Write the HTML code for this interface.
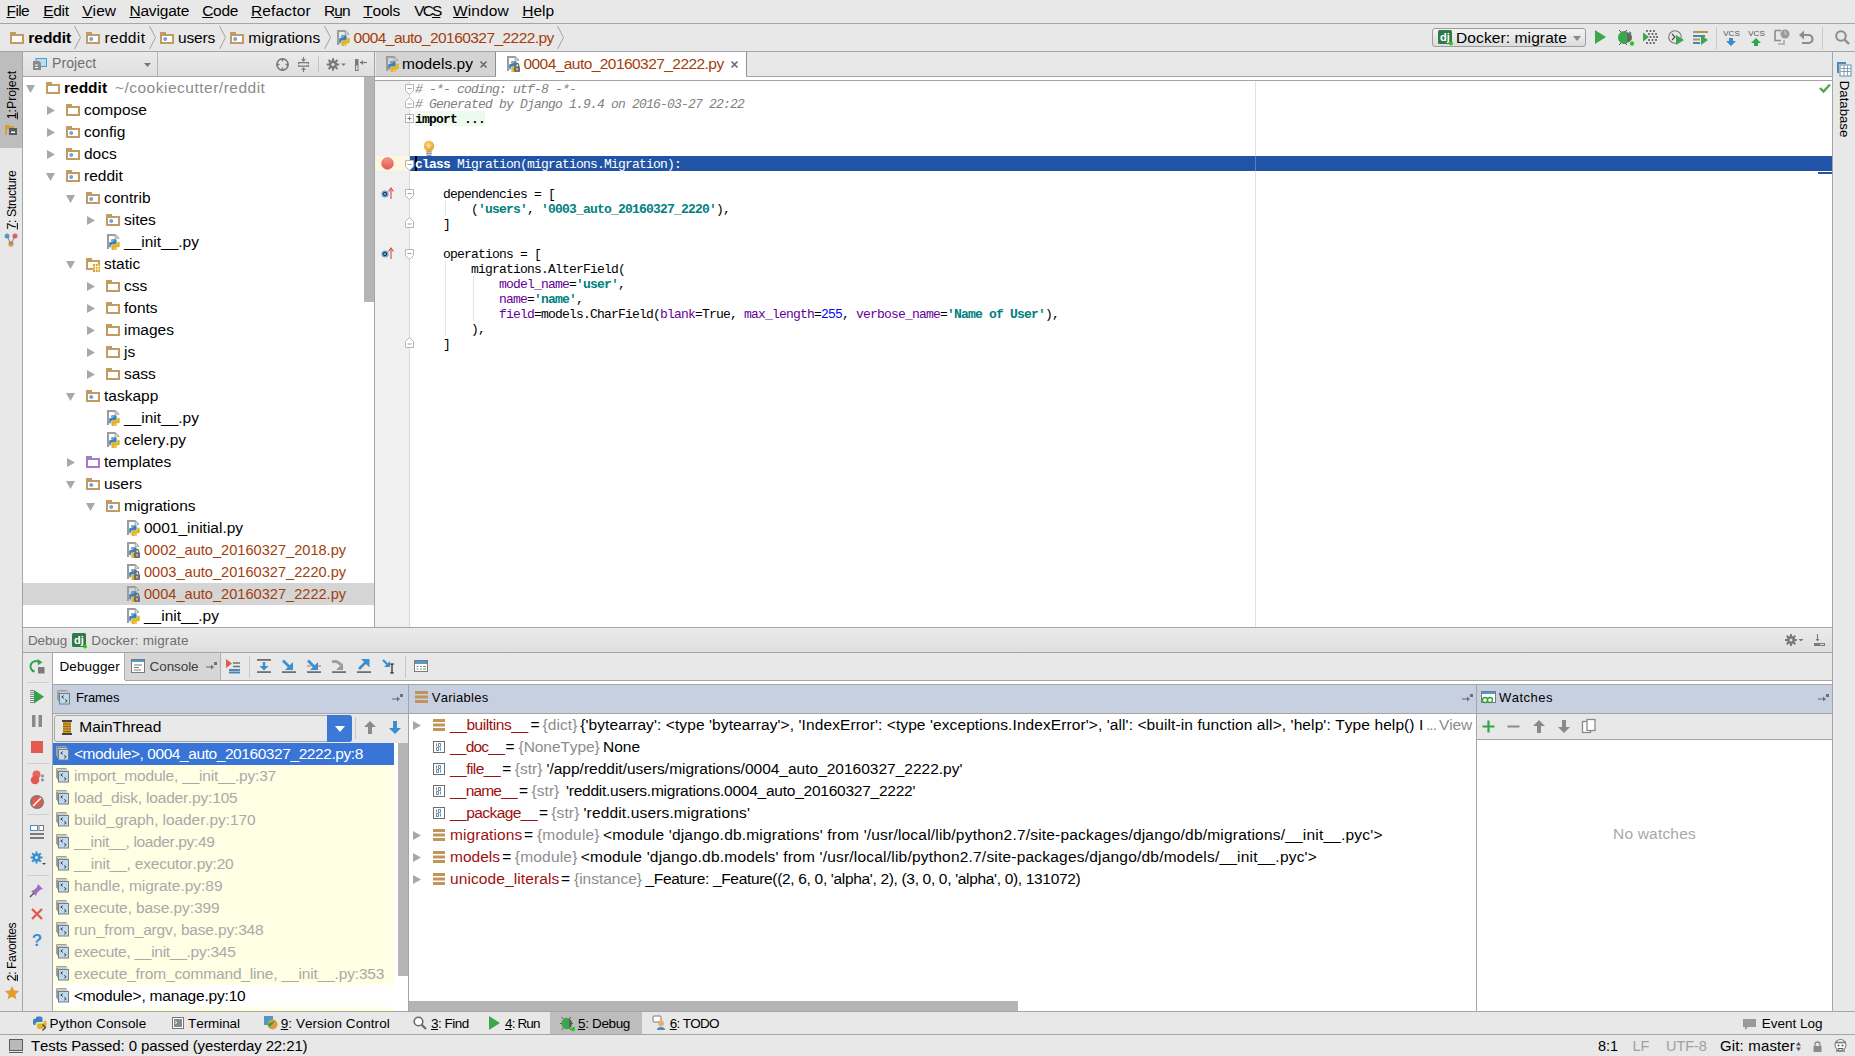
<!DOCTYPE html>
<html><head><meta charset="utf-8">
<style>
*{margin:0;padding:0;box-sizing:border-box}
html,body{width:1855px;height:1056px;overflow:hidden;background:#e8e8e8;font-family:"Liberation Sans",sans-serif;color:#000;position:relative}
.a{position:absolute}
.t{position:absolute;white-space:pre;line-height:1.1172;font-kerning:none}
svg{overflow:visible}
u{text-decoration:underline;text-underline-offset:1px}
</style></head><body>
<svg width="0" height="0" style="position:absolute">
<defs>
<symbol id="fold" viewBox="0 0 14 12"><path d="M0 0h6v2h8v10H0z" fill="#c29b62"/><rect x="2" y="4" width="10" height="6" fill="#fff"/></symbol>
<symbol id="foldm" viewBox="0 0 14 12"><path d="M0 0h6v2h8v10H0z" fill="#c29b62"/><rect x="2" y="4" width="10" height="6" fill="#fff"/><circle cx="5.2" cy="7" r="2" fill="#6aa6d6"/></symbol>
<symbol id="foldp" viewBox="0 0 14 12"><path d="M0 0h6v2h8v10H0z" fill="#a57bc4"/><rect x="2" y="4" width="10" height="6" fill="#fff"/></symbol>
<symbol id="folds" viewBox="0 0 14 14"><path d="M0 0h6v2h8v10H0z" fill="#c29b62"/><rect x="2" y="4" width="10" height="6" fill="#fff"/><rect x="7" y="6" width="7" height="8" fill="#d9a21b"/><path d="M7 8.5h7M7 11h7M9.5 6v8M12 6v8" stroke="#fff" stroke-width="0.8"/></symbol>
<symbol id="pyf" viewBox="0 0 14 16"><path d="M2 15V1h7.2" fill="none" stroke="#9c9c9c" stroke-width="2"/><path d="M9.2 0.6v3.6h3.6z" fill="#fff" stroke="#a4a4a4" stroke-width="1.1" stroke-linejoin="round"/><path d="M6 5.2h3.6q1 0 1 1v4.3H6.2q-1.5 0-1.5 1.5v1.4H4.2q-1 0-1-1V9.2q0-1.2 1.2-1.2h2.2V7.6H5.2V6.2q0-1 .8-1z" fill="#3e80ba"/><circle cx="7.1" cy="6.3" r=".55" fill="#fff"/><path d="M10 16H6.4q-1 0-1-1v-4.3h4.4q1.5 0 1.5-1.5V7.8h1.5q1 0 1 1v3.2q0 1.2-1.2 1.2H9.4v.4h1.4V15q0 1-.8 1z" fill="#e5b520"/><circle cx="8.9" cy="14.9" r=".55" fill="#fff"/></symbol>
<symbol id="pyl" viewBox="0 0 14 16"><path d="M2 15V1h7.2" fill="none" stroke="#9c9c9c" stroke-width="2"/><path d="M9.2 0.6v3.6h3.6z" fill="#fff" stroke="#a4a4a4" stroke-width="1.1" stroke-linejoin="round"/><path d="M6 5.2h3.6q1 0 1 1v4.3H6.2q-1.5 0-1.5 1.5v1.4H4.2q-1 0-1-1V9.2q0-1.2 1.2-1.2h2.2V7.6H5.2V6.2q0-1 .8-1z" fill="#3e80ba"/><circle cx="7.1" cy="6.3" r=".55" fill="#fff"/><rect x="5.4" y="11" width="3" height="5" fill="#e5b520"/><rect x="8" y="10.2" width="6" height="5.8" rx=".8" fill="#6e6e6e"/><path d="M9.3 10.5V9.2a1.7 1.7 0 0 1 3.4 0v1.3" fill="none" stroke="#6e6e6e" stroke-width="1.3"/><rect x="10.3" y="12" width="1.4" height="2.4" fill="#f0d060"/></symbol>
<symbol id="trd" viewBox="0 0 9 8"><path d="M0 0h9L4.5 8z" fill="#a8a8a8"/></symbol>
<symbol id="trr" viewBox="0 0 8 9"><path d="M0 0v9l8-4.5z" fill="#a8a8a8"/></symbol>
<symbol id="chev" viewBox="0 0 7 23"><path d="M0.5 0l6 11.5-6 11.5" fill="none" stroke="#9a9a9a" stroke-width="0.9"/></symbol>
<symbol id="frm" viewBox="0 0 15 16"><path d="M0.5 10V0.5H10.5" fill="none" stroke="#a0a0a0"/><path d="M1.5 11.5V2H11.5" fill="#fff" stroke="#9a9a9a"/><rect x="2.5" y="3.5" width="10" height="10.5" fill="#bcd9ef" stroke="#7c7c7c"/><path d="M6.8 5.6L4.8 7l2 1.4M8.2 9.4l2 1.4-2 1.4" fill="none" stroke="#333" stroke-width="0.9"/></symbol>
<symbol id="varl" viewBox="0 0 14 13"><rect x="0" y="0" width="14" height="3" fill="#b88b48"/><rect x="0" y="5" width="14" height="3" fill="#b88b48"/><rect x="0" y="10" width="14" height="3" fill="#b88b48"/></symbol>
<symbol id="vbin" viewBox="0 0 14 14"><rect x="0.5" y="0.5" width="13" height="13" fill="#fff" stroke="#6e6e6e"/><text x="7" y="10.5" font-size="7" text-anchor="middle" font-family="Liberation Mono" fill="#555" font-weight="bold">01</text></symbol>
</defs></svg>
<div class="t " style="left:6.5px;top:1.87px;font-size:15.50px;letter-spacing:-0.594px;"><u>F</u>ile</div><div class="t " style="left:43.3px;top:1.87px;font-size:15.50px;letter-spacing:-0.327px;"><u>E</u>dit</div><div class="t " style="left:82.2px;top:1.87px;font-size:15.50px;letter-spacing:0.076px;"><u>V</u>iew</div><div class="t " style="left:129.4px;top:1.87px;font-size:15.50px;letter-spacing:-0.172px;"><u>N</u>avigate</div><div class="t " style="left:202.2px;top:1.87px;font-size:15.50px;letter-spacing:-0.314px;"><u>C</u>ode</div><div class="t " style="left:251.0px;top:1.87px;font-size:15.50px;letter-spacing:0.140px;"><u>R</u>efactor</div><div class="t " style="left:324.0px;top:1.87px;font-size:15.50px;letter-spacing:-0.978px;">R<u>u</u>n</div><div class="t " style="left:363.3px;top:1.87px;font-size:15.50px;letter-spacing:-0.240px;"><u>T</u>ools</div><div class="t " style="left:414.2px;top:1.87px;font-size:15.50px;letter-spacing:-1.890px;">VC<u>S</u></div><div class="t " style="left:453.0px;top:1.87px;font-size:15.50px;letter-spacing:0.129px;"><u>W</u>indow</div><div class="t " style="left:522.3px;top:1.87px;font-size:15.50px;letter-spacing:-0.019px;"><u>H</u>elp</div><div class="a" style="left:0px;top:23px;width:1855px;height:1px;background:#a5a5a5;"></div><svg class="a" style="left:10px;top:32px;" width="14" height="12"><use href="#fold"/></svg><div class="t " style="left:28.3px;top:28.57px;font-size:15.50px;font-weight:bold;letter-spacing:-0.026px;">reddit</div><svg class="a" style="left:74px;top:26px;" width="7" height="23"><use href="#chev"/></svg><svg class="a" style="left:86px;top:32px;" width="14" height="12"><use href="#foldm"/></svg><div class="t " style="left:104.4px;top:28.57px;font-size:15.50px;letter-spacing:0.355px;">reddit</div><svg class="a" style="left:149px;top:26px;" width="7" height="23"><use href="#chev"/></svg><svg class="a" style="left:160px;top:32px;" width="14" height="12"><use href="#foldm"/></svg><div class="t " style="left:178.0px;top:28.57px;font-size:15.50px;letter-spacing:-0.180px;">users</div><svg class="a" style="left:219px;top:26px;" width="7" height="23"><use href="#chev"/></svg><svg class="a" style="left:230px;top:32px;" width="14" height="12"><use href="#foldm"/></svg><div class="t " style="left:248.2px;top:28.57px;font-size:15.50px;letter-spacing:0.060px;">migrations</div><svg class="a" style="left:324px;top:26px;" width="7" height="23"><use href="#chev"/></svg><svg class="a" style="left:336px;top:30px;" width="14" height="16"><use href="#pyf"/></svg><div class="t " style="left:353.6px;top:28.57px;font-size:15.50px;color:#a33e0b;letter-spacing:-0.555px;">0004_auto_20160327_2222.py</div><svg class="a" style="left:557px;top:26px;" width="7" height="23"><use href="#chev"/></svg><div class="a" style="left:0px;top:51px;width:1855px;height:1px;background:#a5a5a5;"></div><div class="a" style="left:1432px;top:28px;width:154px;height:19px;border:1px solid #9c9c9c;border-radius:3px;background:linear-gradient(#f4f4f4,#dcdcdc)"></div><svg class="a" style="left:1438px;top:30px;" width="15" height="15" viewBox="0 0 15 15"><rect x="0" y="0" width="14" height="14" rx="1.5" fill="#2f7a4a"/><text x="6.8" y="10.5" font-size="11" font-weight="bold" text-anchor="middle" fill="#fff" font-family="Liberation Sans">dj</text><circle cx="13" cy="13.5" r="2" fill="#22cc22"/></svg><div class="t " style="left:1456.0px;top:28.97px;font-size:15.50px;letter-spacing:0.107px;">Docker: migrate</div><svg class="a" style="left:1573px;top:36px;" width="8" height="5" viewBox="0 0 8 5"><path d="M0 0h8l-4 5z" fill="#8a8a8a"/></svg><svg class="a" style="left:1595px;top:30px;" width="11" height="14" viewBox="0 0 11 14"><path d="M0 0v14l11-7z" fill="#3ba64b"/></svg><svg class="a" style="left:1617px;top:29px;" width="18" height="17" viewBox="0 0 18 17"><ellipse cx="7" cy="8.5" rx="6" ry="6.5" fill="#3ba64b"/><path d="M10 3.5a5 5 0 0 1 0 10" fill="#666"/><path d="M2 1l2 2M10 1l-2 2M2 16l2-2M10 16l-2-2M12 3q2 0 2 2" stroke="#555" stroke-width="1" fill="none"/><circle cx="15" cy="14.5" r="2.2" fill="#22cc22"/></svg><svg class="a" style="left:1643px;top:30px;" width="15" height="15" viewBox="0 0 15 15"><path d="M0 2.5v9l6-4.5z" fill="#3ba64b"/><g fill="#555"><circle cx="4" cy="1" r="1"/><circle cx="7.5" cy="1" r="1"/><circle cx="11" cy="1" r="1"/><circle cx="6" cy="4" r="1"/><circle cx="9.5" cy="4" r="1"/><circle cx="13" cy="4" r="1"/><circle cx="7.5" cy="7" r="1"/><circle cx="11" cy="7" r="1"/><circle cx="14" cy="7" r="1"/><circle cx="6" cy="10" r="1"/><circle cx="9.5" cy="10" r="1"/><circle cx="13" cy="10" r="1"/><circle cx="4" cy="13" r="1"/><circle cx="7.5" cy="13" r="1"/><circle cx="11" cy="13" r="1"/></g></svg><svg class="a" style="left:1668px;top:30px;" width="16" height="15" viewBox="0 0 16 15"><circle cx="7" cy="7" r="6.3" fill="none" stroke="#777" stroke-width="1.1"/><path d="M4 4l3 3-3 3" fill="none" stroke="#444" stroke-width="1.1"/><path d="M8 5v10l8-5z" fill="#3ba64b"/></svg><svg class="a" style="left:1693px;top:31px;" width="16" height="15" viewBox="0 0 16 15"><rect x="0" y="0" width="15" height="2" fill="#c28f4a"/><rect x="0" y="4" width="12" height="2" fill="#3d8ac8"/><rect x="0" y="7.5" width="7" height="2" fill="#c28f4a"/><rect x="0" y="11" width="7" height="2" fill="#3d8ac8"/><path d="M8 4v10l7-5z" fill="#3ba64b"/></svg><div class="a" style="left:1716px;top:27px;width:1px;height:22px;background:#c8c8c8;"></div><svg class="a" style="left:1724px;top:29px;" width="15" height="17" viewBox="0 0 15 17"><text x="7.5" y="7" font-size="8" text-anchor="middle" font-family="Liberation Sans" fill="#555">VCS</text><path d="M5 9h4v3h3l-5 5-5-5h3z" fill="#3d8ac8"/></svg><svg class="a" style="left:1749px;top:29px;" width="15" height="17" viewBox="0 0 15 17"><text x="7.5" y="7" font-size="8" text-anchor="middle" font-family="Liberation Sans" fill="#555">VCS</text><path d="M7 9l5 5H9v3H5v-3H2z" fill="#2ba84a"/></svg><svg class="a" style="left:1774px;top:29px;" width="16" height="16" viewBox="0 0 16 16"><path d="M1 1.5h6M1 1.5v10h6" fill="none" stroke="#8c8c8c" stroke-width="1.6"/><path d="M4 15h6v-4" fill="none" stroke="#a8a8a8" stroke-width="1.6"/><circle cx="11" cy="5" r="4.5" fill="#9a9a9a"/><path d="M11 2v3h2" stroke="#e0e0e0" stroke-width="0.8" fill="none"/></svg><svg class="a" style="left:1799px;top:30px;" width="15" height="15" viewBox="0 0 15 15"><path d="M3.5 5h6a4 4 0 0 1 0 8H3" fill="none" stroke="#8c8c8c" stroke-width="2.2"/><path d="M0 5l5-4.5v9z" fill="#8c8c8c"/></svg><div class="a" style="left:1822px;top:27px;width:1px;height:22px;background:#c8c8c8;"></div><svg class="a" style="left:1835px;top:30px;" width="15" height="15" viewBox="0 0 15 15"><circle cx="6" cy="6" r="4.8" fill="none" stroke="#8c8c8c" stroke-width="2"/><path d="M9.5 9.5l4.5 4.5" stroke="#8c8c8c" stroke-width="2.4"/></svg><div class="a" style="left:0px;top:52px;width:22px;height:96px;background:#bdbdbd;"></div><div class="a" style="left:22px;top:52px;width:1px;height:960px;background:#a5a5a5;"></div><div class="t" style="left:12px;top:71px;font-size:14.5px;transform:translate(-50%,0) rotate(-90deg);transform-origin:50% 50%"></div><div class="a" style="left:12px;top:95.0px;width:0;height:0"><div style="position:absolute;left:0;top:0;transform:translate(-50%,-50%) rotate(-90deg);white-space:pre;font-size:12.3px;line-height:1;color:#000;letter-spacing:0px"><u>1</u>:Project</div></div><svg class="a" style="left:5px;top:123px;" width="13" height="12" viewBox="0 0 13 12"><path d="M0 2h4l1 1h4v3H2v6H0z" fill="#d99c3c"/><rect x="4" y="5" width="8" height="7" fill="#5a5a5a"/><rect x="6" y="8.5" width="4" height="1.5" fill="#fff"/></svg><div class="a" style="left:12px;top:200.25px;width:0;height:0"><div style="position:absolute;left:0;top:0;transform:translate(-50%,-50%) rotate(-90deg);white-space:pre;font-size:12.3px;line-height:1;color:#000;letter-spacing:-0.38px"><u>7</u>: Structure</div></div><svg class="a" style="left:4px;top:233px;" width="14" height="14" viewBox="0 0 14 14"><circle cx="3" cy="3" r="2.5" fill="#5b9bd5"/><circle cx="11" cy="3" r="2.5" fill="#e06060"/><circle cx="7" cy="11" r="2.7" fill="#d59a5b"/><path d="M3 3l4 8 4-8" fill="none" stroke="#777" stroke-width="0.9"/></svg><div class="a" style="left:12px;top:952.0px;width:0;height:0"><div style="position:absolute;left:0;top:0;transform:translate(-50%,-50%) rotate(-90deg);white-space:pre;font-size:12.3px;line-height:1;color:#000;letter-spacing:-0.5px"><u>2</u>: Favorites</div></div><svg class="a" style="left:5px;top:986px;" width="14" height="14" viewBox="0 0 14 14"><path d="M7 0l2.1 4.6 4.9.5-3.7 3.3 1.1 4.9L7 10.8 2.6 13.3l1.1-4.9L0 5.1l4.9-.5z" fill="#e49b2a"/></svg><div class="a" style="left:1832px;top:52px;width:1px;height:960px;background:#a5a5a5;"></div><svg class="a" style="left:1837px;top:62px;" width="14" height="14" viewBox="0 0 14 14"><path d="M0 0h9v2H2v9H0z" fill="#4a8ac0"/><rect x="3" y="3" width="11" height="11" fill="#fff" stroke="#6a8aa8" stroke-width="1"/><path d="M3.5 6.5h10M3.5 9.5h10M7 3.5v10M10.5 3.5v10" stroke="#6a8aa8" stroke-width="0.8"/></svg><div class="a" style="left:1843.5px;top:109.0px;width:0;height:0"><div style="position:absolute;left:0;top:0;transform:translate(-50%,-50%) rotate(90deg);white-space:pre;font-size:13.2px;line-height:1;color:#000;letter-spacing:0px">Database</div></div><div class="a" style="left:23px;top:52px;width:352px;height:24px;background:linear-gradient(#ebebeb,#dfdfdf)"></div><div class="a" style="left:157px;top:52px;width:1px;height:24px;background:#b4b4b4;"></div><svg class="a" style="left:33px;top:58px;" width="14" height="12" viewBox="0 0 14 12"><rect x="3" y="0.5" width="10.5" height="8" fill="#b8dcf2" stroke="#4f9bd0"/><path d="M0 3h6l2 2v7H0z" fill="#8a8a8a"/><rect x="2" y="6.5" width="3" height="1" fill="#fff"/><rect x="2" y="9" width="3" height="1" fill="#fff"/></svg><div class="t " style="left:52.0px;top:55.93px;font-size:14.00px;color:#6e6e6e;letter-spacing:0.090px;">Project</div><svg class="a" style="left:144px;top:63px;" width="7" height="4" viewBox="0 0 7 4"><path d="M0 0h7l-3.5 4z" fill="#777"/></svg><svg class="a" style="left:276px;top:58px;" width="13" height="13" viewBox="0 0 13 13"><circle cx="6.5" cy="6.5" r="5.6" fill="none" stroke="#7a7a7a" stroke-width="1.6"/><path d="M6.5 0.5v3M6.5 9.5v3M0.5 6.5h3M9.5 6.5h3" stroke="#7a7a7a" stroke-width="1.4"/></svg><svg class="a" style="left:298px;top:57px;" width="11" height="15" viewBox="0 0 11 15"><path d="M0.6 7V5.6h9.8V7M0.6 7.8V9.2h9.8V7.8" fill="none" stroke="#7a7a7a" stroke-width="1.2"/><path d="M5.5 0v4M5.5 15v-4" stroke="#7a7a7a" stroke-width="1.2"/><path d="M3 2.2l2.5 2.5 2.5-2.5M3 12.8l2.5-2.5 2.5 2.5" fill="#7a7a7a"/></svg><div class="a" style="left:318px;top:56px;width:1px;height:16px;background:#c4c4c4;"></div><svg class="a" style="left:327px;top:58px;" width="20" height="13" viewBox="0 0 20 13"><g transform="translate(6,6.5)"><circle r="4.2" fill="#7a7a7a"/><circle r="1.6" fill="#e4e4e4"/><g stroke="#7a7a7a" stroke-width="2"><path d="M0-6.3v2.5M0 6.3v-2.5M-6.3 0h2.5M6.3 0h-2.5M-4.5-4.5l1.8 1.8M4.5 4.5l-1.8-1.8M-4.5 4.5l1.8-1.8M4.5-4.5l-1.8 1.8"/></g></g><path d="M14 5.5h5l-2.5 2.5z" fill="#7a7a7a"/></svg><svg class="a" style="left:355px;top:59px;" width="13" height="12" viewBox="0 0 13 12"><rect x="0.5" y="0.5" width="2.5" height="11" fill="none" stroke="#7a7a7a" stroke-width="1"/><rect x="0.5" y="0.5" width="2.5" height="6" fill="#7a7a7a"/><path d="M5 3.5h7" stroke="#7a7a7a" stroke-width="1.2"/><path d="M5 3.5l3-2.5v5z" fill="#7a7a7a"/></svg><div class="a" style="left:23px;top:76px;width:352px;height:1px;background:#a5a5a5;"></div><div class="a" style="left:23px;top:77px;width:351px;height:551px;background:#fff;"></div><div class="a" style="left:364px;top:77px;width:10px;height:225px;background:#b5b5b5;"></div><div class="a" style="left:374px;top:52px;width:1px;height:576px;background:#a5a5a5;"></div><div class="a" style="left:23px;top:583px;width:351px;height:22px;background:#d5d5d5;"></div><svg class="a" style="left:26px;top:85px;" width="9" height="8"><use href="#trd"/></svg><svg class="a" style="left:46px;top:82px;" width="14" height="12"><use href="#fold"/></svg><div class="t " style="left:64.0px;top:79.27px;font-size:15.50px;"><b>reddit</b></div><svg class="a" style="left:47px;top:106px;" width="8" height="9"><use href="#trr"/></svg><svg class="a" style="left:66px;top:104px;" width="14" height="12"><use href="#fold"/></svg><div class="t " style="left:84.0px;top:101.27px;font-size:15.50px;">compose</div><svg class="a" style="left:47px;top:128px;" width="8" height="9"><use href="#trr"/></svg><svg class="a" style="left:66px;top:126px;" width="14" height="12"><use href="#foldm"/></svg><div class="t " style="left:84.0px;top:123.27px;font-size:15.50px;">config</div><svg class="a" style="left:47px;top:150px;" width="8" height="9"><use href="#trr"/></svg><svg class="a" style="left:66px;top:148px;" width="14" height="12"><use href="#foldm"/></svg><div class="t " style="left:84.0px;top:145.27px;font-size:15.50px;">docs</div><svg class="a" style="left:46px;top:173px;" width="9" height="8"><use href="#trd"/></svg><svg class="a" style="left:66px;top:170px;" width="14" height="12"><use href="#foldm"/></svg><div class="t " style="left:84.0px;top:167.27px;font-size:15.50px;">reddit</div><svg class="a" style="left:66px;top:195px;" width="9" height="8"><use href="#trd"/></svg><svg class="a" style="left:86px;top:192px;" width="14" height="12"><use href="#foldm"/></svg><div class="t " style="left:104.0px;top:189.27px;font-size:15.50px;">contrib</div><svg class="a" style="left:87px;top:216px;" width="8" height="9"><use href="#trr"/></svg><svg class="a" style="left:106px;top:214px;" width="14" height="12"><use href="#foldm"/></svg><div class="t " style="left:124.0px;top:211.27px;font-size:15.50px;">sites</div><svg class="a" style="left:106px;top:234px;" width="14" height="16"><use href="#pyf"/></svg><div class="t " style="left:124.0px;top:233.27px;font-size:15.50px;">__init__.py</div><svg class="a" style="left:66px;top:261px;" width="9" height="8"><use href="#trd"/></svg><svg class="a" style="left:86px;top:258px;" width="14" height="14"><use href="#folds"/></svg><div class="t " style="left:104.0px;top:255.27px;font-size:15.50px;">static</div><svg class="a" style="left:87px;top:282px;" width="8" height="9"><use href="#trr"/></svg><svg class="a" style="left:106px;top:280px;" width="14" height="12"><use href="#fold"/></svg><div class="t " style="left:124.0px;top:277.27px;font-size:15.50px;">css</div><svg class="a" style="left:87px;top:304px;" width="8" height="9"><use href="#trr"/></svg><svg class="a" style="left:106px;top:302px;" width="14" height="12"><use href="#fold"/></svg><div class="t " style="left:124.0px;top:299.27px;font-size:15.50px;">fonts</div><svg class="a" style="left:87px;top:326px;" width="8" height="9"><use href="#trr"/></svg><svg class="a" style="left:106px;top:324px;" width="14" height="12"><use href="#fold"/></svg><div class="t " style="left:124.0px;top:321.27px;font-size:15.50px;">images</div><svg class="a" style="left:87px;top:348px;" width="8" height="9"><use href="#trr"/></svg><svg class="a" style="left:106px;top:346px;" width="14" height="12"><use href="#fold"/></svg><div class="t " style="left:124.0px;top:343.27px;font-size:15.50px;">js</div><svg class="a" style="left:87px;top:370px;" width="8" height="9"><use href="#trr"/></svg><svg class="a" style="left:106px;top:368px;" width="14" height="12"><use href="#fold"/></svg><div class="t " style="left:124.0px;top:365.27px;font-size:15.50px;">sass</div><svg class="a" style="left:66px;top:393px;" width="9" height="8"><use href="#trd"/></svg><svg class="a" style="left:86px;top:390px;" width="14" height="12"><use href="#foldm"/></svg><div class="t " style="left:104.0px;top:387.27px;font-size:15.50px;">taskapp</div><svg class="a" style="left:106px;top:410px;" width="14" height="16"><use href="#pyf"/></svg><div class="t " style="left:124.0px;top:409.27px;font-size:15.50px;">__init__.py</div><svg class="a" style="left:106px;top:432px;" width="14" height="16"><use href="#pyf"/></svg><div class="t " style="left:124.0px;top:431.27px;font-size:15.50px;">celery.py</div><svg class="a" style="left:67px;top:458px;" width="8" height="9"><use href="#trr"/></svg><svg class="a" style="left:86px;top:456px;" width="14" height="12"><use href="#foldp"/></svg><div class="t " style="left:104.0px;top:453.27px;font-size:15.50px;">templates</div><svg class="a" style="left:66px;top:481px;" width="9" height="8"><use href="#trd"/></svg><svg class="a" style="left:86px;top:478px;" width="14" height="12"><use href="#foldm"/></svg><div class="t " style="left:104.0px;top:475.27px;font-size:15.50px;">users</div><svg class="a" style="left:86px;top:503px;" width="9" height="8"><use href="#trd"/></svg><svg class="a" style="left:106px;top:500px;" width="14" height="12"><use href="#foldm"/></svg><div class="t " style="left:124.0px;top:497.27px;font-size:15.50px;">migrations</div><svg class="a" style="left:126px;top:520px;" width="14" height="16"><use href="#pyf"/></svg><div class="t " style="left:144.0px;top:519.27px;font-size:15.50px;">0001_initial.py</div><svg class="a" style="left:126px;top:542px;" width="14" height="16"><use href="#pyl"/></svg><div class="t " style="left:144.0px;top:541.27px;font-size:15.50px;"><span style="color:#a33e0b;font-size:14.6px">0002_auto_20160327_2018.py</span></div><svg class="a" style="left:126px;top:564px;" width="14" height="16"><use href="#pyl"/></svg><div class="t " style="left:144.0px;top:563.27px;font-size:15.50px;"><span style="color:#a33e0b;font-size:14.6px">0003_auto_20160327_2220.py</span></div><svg class="a" style="left:126px;top:586px;" width="14" height="16"><use href="#pyl"/></svg><div class="t " style="left:144.0px;top:585.27px;font-size:15.50px;"><span style="color:#a33e0b;font-size:14.6px">0004_auto_20160327_2222.py</span></div><svg class="a" style="left:126px;top:608px;" width="14" height="16"><use href="#pyf"/></svg><div class="t " style="left:144.0px;top:607.27px;font-size:15.50px;">__init__.py</div><div class="t " style="left:114.9px;top:79.27px;font-size:15.50px;color:#8c8c8c;letter-spacing:0.500px;">~/cookiecutter/reddit</div><div class="a" style="left:375px;top:76px;width:1457px;height:1px;background:#a5a5a5;"></div><div class="a" style="left:375px;top:77px;width:1457px;height:3px;background:#fff;"></div><div class="a" style="left:376px;top:52px;width:119px;height:24px;background:#d4d4d4;"></div><div class="a" style="left:495px;top:52px;width:1px;height:24px;background:#8f8f8f;"></div><div class="a" style="left:496px;top:52px;width:250px;height:25px;background:#fff;"></div><div class="a" style="left:746px;top:52px;width:1px;height:24px;background:#8f8f8f;"></div><svg class="a" style="left:385px;top:56px;" width="14" height="16"><use href="#pyf"/></svg><div class="t " style="left:402.0px;top:54.57px;font-size:15.50px;letter-spacing:0.040px;">models.py</div><svg class="a" style="left:480px;top:61px;" width="7" height="7" viewBox="0 0 7 7"><path d="M0.5 0.5l6 6M6.5 0.5l-6 6" stroke="#6a6a6a" stroke-width="1.6"/></svg><svg class="a" style="left:506px;top:56px;" width="14" height="16"><use href="#pyl"/></svg><div class="t " style="left:523.5px;top:54.57px;font-size:15.50px;color:#a33e0b;letter-spacing:-0.559px;">0004_auto_20160327_2222.py</div><svg class="a" style="left:731px;top:61px;" width="7" height="7" viewBox="0 0 7 7"><path d="M0.5 0.5l6 6M6.5 0.5l-6 6" stroke="#6a6a6a" stroke-width="1.6"/></svg><div class="a" style="left:375px;top:80px;width:1457px;height:1px;background:#a5a5a5;"></div><div class="a" style="left:375px;top:81px;width:1457px;height:547px;background:#fff;"></div><div class="a" style="left:375px;top:81px;width:34px;height:547px;background:#f0f0f0;"></div><div class="a" style="left:375px;top:156px;width:34px;height:15px;background:#fdf7e2;"></div><div class="a" style="left:409px;top:81px;width:1px;height:547px;background:#d8d8d8;"></div><div class="a" style="left:410px;top:156px;width:1422px;height:15px;background:#2154a6;"></div><div class="a" style="left:1255px;top:81px;width:1px;height:75px;background:#e2e2e2;"></div><div class="a" style="left:1255px;top:156px;width:1px;height:15px;background:#5a7fbf;"></div><div class="a" style="left:1255px;top:171px;width:1px;height:457px;background:#e2e2e2;"></div><div class="a" style="left:415px;top:156px;width:2px;height:15px;background:#000;"></div><div class="a" style="left:1818px;top:172px;width:14px;height:2px;background:#2154a6;"></div><svg class="a" style="left:1819px;top:83px;" width="12" height="10" viewBox="0 0 12 10"><path d="M1 5l3.5 3.5L11 1.5" fill="none" stroke="#4fa84f" stroke-width="2.4"/></svg><div class="a" style="left:415px;top:111px;width:70px;height:15px;background:#eefaee;"></div><div class="t " style="left:415.0px;top:83.48px;font-size:13.00px;font-family:'Liberation Mono',monospace;color:#808080;font-style:italic;letter-spacing:-0.801px"># -*- coding: utf-8 -*-</div><div class="t " style="left:415.0px;top:98.48px;font-size:13.00px;font-family:'Liberation Mono',monospace;color:#808080;font-style:italic;letter-spacing:-0.801px"># Generated by Django 1.9.4 on 2016-03-27 22:22</div><div class="t " style="left:415.0px;top:113.48px;font-size:13.00px;font-family:'Liberation Mono',monospace;color:#000;font-weight:bold;letter-spacing:-0.801px">import ...</div><div class="t " style="left:415.0px;top:158.48px;font-size:13.00px;font-family:'Liberation Mono',monospace;color:#fff;font-weight:bold;letter-spacing:-0.801px">class</div><div class="t " style="left:457.0px;top:158.48px;font-size:13.00px;font-family:'Liberation Mono',monospace;color:#fff;letter-spacing:-0.801px">Migration(migrations.Migration):</div><div class="t " style="left:443.0px;top:188.48px;font-size:13.00px;font-family:'Liberation Mono',monospace;color:#000;letter-spacing:-0.801px">dependencies = [</div><div class="t " style="left:471.0px;top:203.48px;font-size:13.00px;font-family:'Liberation Mono',monospace;color:#000;letter-spacing:-0.801px">(</div><div class="t " style="left:478.0px;top:203.48px;font-size:13.00px;font-family:'Liberation Mono',monospace;color:#008080;font-weight:bold;letter-spacing:-0.801px">&#x27;users&#x27;</div><div class="t " style="left:527.0px;top:203.48px;font-size:13.00px;font-family:'Liberation Mono',monospace;color:#000;letter-spacing:-0.801px">, </div><div class="t " style="left:541.0px;top:203.48px;font-size:13.00px;font-family:'Liberation Mono',monospace;color:#008080;font-weight:bold;letter-spacing:-0.801px">&#x27;0003_auto_20160327_2220&#x27;</div><div class="t " style="left:716.0px;top:203.48px;font-size:13.00px;font-family:'Liberation Mono',monospace;color:#000;letter-spacing:-0.801px">),</div><div class="t " style="left:443.0px;top:218.48px;font-size:13.00px;font-family:'Liberation Mono',monospace;color:#000;letter-spacing:-0.801px">]</div><div class="t " style="left:443.0px;top:248.48px;font-size:13.00px;font-family:'Liberation Mono',monospace;color:#000;letter-spacing:-0.801px">operations = [</div><div class="t " style="left:471.0px;top:263.48px;font-size:13.00px;font-family:'Liberation Mono',monospace;color:#000;letter-spacing:-0.801px">migrations.AlterField(</div><div class="t " style="left:499.0px;top:278.48px;font-size:13.00px;font-family:'Liberation Mono',monospace;color:#660099;letter-spacing:-0.801px">model_name</div><div class="t " style="left:569.0px;top:278.48px;font-size:13.00px;font-family:'Liberation Mono',monospace;color:#000;letter-spacing:-0.801px">=</div><div class="t " style="left:576.0px;top:278.48px;font-size:13.00px;font-family:'Liberation Mono',monospace;color:#008080;font-weight:bold;letter-spacing:-0.801px">&#x27;user&#x27;</div><div class="t " style="left:618.0px;top:278.48px;font-size:13.00px;font-family:'Liberation Mono',monospace;color:#000;letter-spacing:-0.801px">,</div><div class="t " style="left:499.0px;top:293.48px;font-size:13.00px;font-family:'Liberation Mono',monospace;color:#660099;letter-spacing:-0.801px">name</div><div class="t " style="left:527.0px;top:293.48px;font-size:13.00px;font-family:'Liberation Mono',monospace;color:#000;letter-spacing:-0.801px">=</div><div class="t " style="left:534.0px;top:293.48px;font-size:13.00px;font-family:'Liberation Mono',monospace;color:#008080;font-weight:bold;letter-spacing:-0.801px">&#x27;name&#x27;</div><div class="t " style="left:576.0px;top:293.48px;font-size:13.00px;font-family:'Liberation Mono',monospace;color:#000;letter-spacing:-0.801px">,</div><div class="t " style="left:499.0px;top:308.48px;font-size:13.00px;font-family:'Liberation Mono',monospace;color:#660099;letter-spacing:-0.801px">field</div><div class="t " style="left:534.0px;top:308.48px;font-size:13.00px;font-family:'Liberation Mono',monospace;color:#000;letter-spacing:-0.801px">=models.CharField(</div><div class="t " style="left:660.0px;top:308.48px;font-size:13.00px;font-family:'Liberation Mono',monospace;color:#660099;letter-spacing:-0.801px">blank</div><div class="t " style="left:695.0px;top:308.48px;font-size:13.00px;font-family:'Liberation Mono',monospace;color:#000;letter-spacing:-0.801px">=True, </div><div class="t " style="left:744.0px;top:308.48px;font-size:13.00px;font-family:'Liberation Mono',monospace;color:#660099;letter-spacing:-0.801px">max_length</div><div class="t " style="left:814.0px;top:308.48px;font-size:13.00px;font-family:'Liberation Mono',monospace;color:#000;letter-spacing:-0.801px">=</div><div class="t " style="left:821.0px;top:308.48px;font-size:13.00px;font-family:'Liberation Mono',monospace;color:#0000ff;letter-spacing:-0.801px">255</div><div class="t " style="left:842.0px;top:308.48px;font-size:13.00px;font-family:'Liberation Mono',monospace;color:#000;letter-spacing:-0.801px">, </div><div class="t " style="left:856.0px;top:308.48px;font-size:13.00px;font-family:'Liberation Mono',monospace;color:#660099;letter-spacing:-0.801px">verbose_name</div><div class="t " style="left:940.0px;top:308.48px;font-size:13.00px;font-family:'Liberation Mono',monospace;color:#000;letter-spacing:-0.801px">=</div><div class="t " style="left:947.0px;top:308.48px;font-size:13.00px;font-family:'Liberation Mono',monospace;color:#008080;font-weight:bold;letter-spacing:-0.801px">&#x27;Name of User&#x27;</div><div class="t " style="left:1045.0px;top:308.48px;font-size:13.00px;font-family:'Liberation Mono',monospace;color:#000;letter-spacing:-0.801px">),</div><div class="t " style="left:471.0px;top:323.48px;font-size:13.00px;font-family:'Liberation Mono',monospace;color:#000;letter-spacing:-0.801px">),</div><div class="t " style="left:443.0px;top:338.48px;font-size:13.00px;font-family:'Liberation Mono',monospace;color:#000;letter-spacing:-0.801px">]</div><svg class="a" style="left:405px;top:84px;" width="9" height="11" viewBox="0 0 9 11"><path d="M0.5 0.5h8v6l-4 4-4-4z" fill="#fff" stroke="#b4b4b4"/><path d="M2.5 4.5h4" stroke="#a0a0a0"/></svg><svg class="a" style="left:405px;top:97px;" width="9" height="11" viewBox="0 0 9 11"><path d="M0.5 10.5h8v-6l-4-4-4 4z" fill="#fff" stroke="#b4b4b4"/><path d="M2.5 7h4" stroke="#a0a0a0"/></svg><svg class="a" style="left:405px;top:114px;" width="9" height="9" viewBox="0 0 9 9"><rect x="0.5" y="0.5" width="8" height="8" fill="#fff" stroke="#b4b4b4"/><path d="M2.5 4.5h4M4.5 2.5v4" stroke="#808080"/></svg><svg class="a" style="left:405px;top:160px;" width="9" height="11" viewBox="0 0 9 11"><path d="M0.5 0.5h8v6l-4 4-4-4z" fill="#fff" stroke="#b4b4b4"/><path d="M2.5 4.5h4" stroke="#a0a0a0"/></svg><svg class="a" style="left:405px;top:189px;" width="9" height="11" viewBox="0 0 9 11"><path d="M0.5 0.5h8v6l-4 4-4-4z" fill="#fff" stroke="#b4b4b4"/><path d="M2.5 4.5h4" stroke="#a0a0a0"/></svg><svg class="a" style="left:405px;top:217px;" width="9" height="11" viewBox="0 0 9 11"><path d="M0.5 10.5h8v-6l-4-4-4 4z" fill="#fff" stroke="#b4b4b4"/><path d="M2.5 7h4" stroke="#a0a0a0"/></svg><svg class="a" style="left:405px;top:249px;" width="9" height="11" viewBox="0 0 9 11"><path d="M0.5 0.5h8v6l-4 4-4-4z" fill="#fff" stroke="#b4b4b4"/><path d="M2.5 4.5h4" stroke="#a0a0a0"/></svg><svg class="a" style="left:405px;top:337px;" width="9" height="11" viewBox="0 0 9 11"><path d="M0.5 10.5h8v-6l-4-4-4 4z" fill="#fff" stroke="#b4b4b4"/><path d="M2.5 7h4" stroke="#a0a0a0"/></svg><div class="a" style="left:445px;top:201px;width:1px;height:15px;background:#e4e4e4;"></div><div class="a" style="left:445px;top:261px;width:1px;height:75px;background:#e4e4e4;"></div><div class="a" style="left:473px;top:276px;width:1px;height:45px;background:#e4e4e4;"></div><svg class="a" style="left:381px;top:157px;" width="13" height="13" viewBox="0 0 13 13"><defs><linearGradient id="bpg" x1="0" y1="0" x2="0" y2="1"><stop offset="0" stop-color="#f0968a"/><stop offset="1" stop-color="#e2584c"/></linearGradient></defs><circle cx="6.5" cy="6.5" r="5.8" fill="url(#bpg)" stroke="#e0695e" stroke-width="0.8"/></svg><svg class="a" style="left:381px;top:187px;" width="14" height="13" viewBox="0 0 14 13"><circle cx="4" cy="7" r="3.6" fill="#62a7dc"/><circle cx="4" cy="7" r="1.7" fill="none" stroke="#333" stroke-width="1"/><path d="M10 12V2" stroke="#d9534f" stroke-width="1.2"/><path d="M7.5 4.5L10 1l2.5 3.5" fill="none" stroke="#d9534f" stroke-width="1.2"/></svg><svg class="a" style="left:381px;top:247px;" width="14" height="13" viewBox="0 0 14 13"><circle cx="4" cy="7" r="3.6" fill="#62a7dc"/><circle cx="4" cy="7" r="1.7" fill="none" stroke="#333" stroke-width="1"/><path d="M10 12V2" stroke="#d9534f" stroke-width="1.2"/><path d="M7.5 4.5L10 1l2.5 3.5" fill="none" stroke="#d9534f" stroke-width="1.2"/></svg><svg class="a" style="left:423px;top:140px;" width="12" height="17" viewBox="0 0 12 17"><defs><radialGradient id="bg" cx="0.4" cy="0.35" r="0.7"><stop offset="0" stop-color="#fbd36a"/><stop offset="1" stop-color="#eb9a2c"/></radialGradient></defs><circle cx="6" cy="6" r="5.2" fill="url(#bg)"/><path d="M3.8 4.5l1.2 1.6 1-1.2 1 1.2 1.2-1.6M6 6v3" fill="none" stroke="#fff5c0" stroke-width=".7"/><rect x="3.2" y="11.3" width="5.6" height="1.2" fill="#8a8a8a"/><rect x="3.2" y="13.1" width="5.6" height="1.2" fill="#8a8a8a"/><rect x="3.6" y="14.9" width="4.8" height="1" fill="#8a8a8a"/></svg><div class="a" style="left:23px;top:627px;width:1809px;height:1px;background:#a5a5a5;"></div><div class="a" style="left:23px;top:628px;width:1809px;height:24px;background:linear-gradient(#ebebeb,#dedede)"></div><div class="a" style="left:23px;top:652px;width:1809px;height:1px;background:#a5a5a5;"></div><div class="t " style="left:28.0px;top:632.78px;font-size:13.50px;color:#6e6e6e;letter-spacing:-0.136px;">Debug</div><svg class="a" style="left:72px;top:633px;" width="15" height="15" viewBox="0 0 15 15"><rect x="0" y="0" width="14" height="14" rx="1.5" fill="#2f7a4a"/><text x="6.8" y="10.5" font-size="11" font-weight="bold" text-anchor="middle" fill="#fff" font-family="Liberation Sans">dj</text><circle cx="13" cy="13.5" r="2" fill="#22cc22"/></svg><div class="t " style="left:91.3px;top:632.78px;font-size:13.50px;color:#6e6e6e;letter-spacing:0.135px;">Docker: migrate</div><svg class="a" style="left:1785px;top:634px;" width="19" height="12" viewBox="0 0 19 12"><g transform="translate(6,6)"><circle r="4" fill="#7a7a7a"/><circle r="1.5" fill="#e4e4e4"/><g stroke="#7a7a7a" stroke-width="2"><path d="M0-6v2.5M0 6v-2.5M-6 0h2.5M6 0h-2.5M-4.3-4.3l1.8 1.8M4.3 4.3l-1.8-1.8M-4.3 4.3l1.8-1.8M4.3-4.3l-1.8 1.8"/></g></g><path d="M13.5 5h5l-2.5 2.5z" fill="#7a7a7a"/></svg><svg class="a" style="left:1814px;top:634px;" width="11" height="12" viewBox="0 0 11 12"><path d="M3.5 0v7" stroke="#7a7a7a" stroke-width="1.1"/><path d="M1.5 5l2 2.5 2-2.5z" fill="#7a7a7a"/><rect x="0" y="9" width="11" height="3" fill="#7a7a7a"/><rect x="6" y="10" width="4" height="1" fill="#e0e0e0"/></svg><div class="a" style="left:23px;top:653px;width:30px;height:359px;background:#e8e8e8;"></div><div class="a" style="left:52px;top:653px;width:1px;height:359px;background:#a5a5a5;"></div><div class="a" style="left:53px;top:653px;width:1779px;height:27px;background:#e8e8e8;"></div><div class="a" style="left:53px;top:653px;width:72px;height:28px;background:#fff;"></div><div class="a" style="left:125px;top:653px;width:95px;height:27px;background:#d6d6d6;"></div><div class="a" style="left:124px;top:653px;width:1px;height:27px;background:#b0b0b0;"></div><div class="a" style="left:220px;top:653px;width:1px;height:27px;background:#b0b0b0;"></div><div class="a" style="left:125px;top:680px;width:1707px;height:1px;background:#a5a5a5;"></div><div class="a" style="left:53px;top:681px;width:1779px;height:3px;background:#fff;"></div><div class="t " style="left:59.4px;top:658.78px;font-size:13.50px;letter-spacing:0.151px;">Debugger</div><svg class="a" style="left:131px;top:659px;" width="14" height="14" viewBox="0 0 14 14"><rect x="0.5" y="0.5" width="13" height="13" fill="#fff" stroke="#7a7a7a"/><rect x="1" y="1" width="12" height="2" fill="#4f9bd0"/><path d="M3 6h8M3 8.5h5M3 11h7" stroke="#7a7a7a" stroke-width="1.1"/></svg><div class="t " style="left:149.6px;top:658.78px;font-size:13.50px;color:#3c3c3c;letter-spacing:-0.090px;">Console</div><svg class="a" style="left:206px;top:662px;" width="11" height="8" viewBox="0 0 11 8"><path d="M0 5h6" stroke="#707070" stroke-width="1.1"/><path d="M5 2.5l3 2.5-3 2.5z" fill="#707070"/><rect x="8" y="0" width="3" height="3" fill="#707070"/></svg><svg class="a" style="left:30px;top:659px;" width="15" height="15" viewBox="0 0 15 15"><path d="M4.6 12.6A5.3 5.3 0 1 1 9.2 3.4" fill="none" stroke="#2ea44f" stroke-width="2"/><path d="M7.5 0l5 3.2-4.6 3z" fill="#2ea44f"/><rect x="8" y="8" width="6.5" height="6.5" fill="#7c7c7c"/></svg><div class="a" style="left:27px;top:682px;width:22px;height:1px;background:#cfcfcf;"></div><svg class="a" style="left:226px;top:659px;" width="15" height="14" viewBox="0 0 15 14"><path d="M0 0v9l6-4.5z" fill="#e05a4f"/><path d="M7 4h7M7 7.5h7M3 11h11M3 13.5h11" stroke="#707070" stroke-width="1.5"/><path d="M3 11h11M3 13.5h11" stroke="#3a85c2" stroke-width="1.5"/></svg><div class="a" style="left:249px;top:656px;width:1px;height:22px;background:#c8c8c8;"></div><svg class="a" style="left:257px;top:659px;" width="15" height="14" viewBox="0 0 15 14"><rect x="0" y="0" width="14" height="1.8" fill="#707070"/><path d="M7 3v6" stroke="#3a8fd0" stroke-width="2.4"/><path d="M2.5 7h9L7 11.5z" fill="#3a8fd0"/><rect x="0" y="12.2" width="14" height="1.8" fill="#707070"/></svg><svg class="a" style="left:282px;top:659px;" width="15" height="14" viewBox="0 0 15 14"><path d="M1 1.5l7 7" stroke="#3a8fd0" stroke-width="2.6"/><path d="M11 3v8H3z" fill="#3a8fd0"/><rect x="0" y="12.2" width="14" height="1.8" fill="#707070"/></svg><svg class="a" style="left:307px;top:659px;" width="15" height="14" viewBox="0 0 15 14"><path d="M1 1.5l7 7" stroke="#3a8fd0" stroke-width="2.6"/><path d="M11 3v8H3z" fill="#3a8fd0"/><path d="M0 7h4M10 7h4" stroke="#e05a4f" stroke-width="1.2"/><rect x="0" y="12.2" width="14" height="1.8" fill="#707070"/></svg><svg class="a" style="left:332px;top:659px;" width="15" height="14" viewBox="0 0 15 14"><path d="M0 3q5-2 9 3" fill="none" stroke="#9a9a9a" stroke-width="2.6"/><path d="M11 4v7H4z" fill="#9a9a9a"/><rect x="0" y="12.2" width="14" height="1.8" fill="#707070"/></svg><svg class="a" style="left:357px;top:659px;" width="15" height="14" viewBox="0 0 15 14"><path d="M2 10l6.5-6.5" stroke="#3a8fd0" stroke-width="2.6"/><path d="M12.5 0v8.5l-8.5-8.5z" fill="#3a8fd0"/><rect x="0" y="12.2" width="14" height="1.8" fill="#707070"/></svg><svg class="a" style="left:382px;top:659px;" width="15" height="14" viewBox="0 0 15 14"><path d="M1 1l5 5" stroke="#3a8fd0" stroke-width="2.2"/><path d="M8 2v6H2z" fill="#3a8fd0"/><path d="M8 5h4M10 5v9M8 14h4" stroke="#222" stroke-width="1.2"/></svg><div class="a" style="left:405px;top:656px;width:1px;height:22px;background:#c8c8c8;"></div><svg class="a" style="left:414px;top:660px;" width="14" height="12" viewBox="0 0 14 12"><rect x="0.5" y="0.5" width="13" height="11" fill="#fff" stroke="#7a7a7a"/><rect x="1" y="1" width="12" height="3" fill="#4f9bd0"/><path d="M2.5 6.5h2M6 6.5h2M9 6.5h3M2.5 9h2M6 9h2" stroke="#888" stroke-width="1"/><path d="M9 6.5h3" stroke="#e05a4f"/><path d="M9 9h3" stroke="#2ea44f"/></svg><svg class="a" style="left:30px;top:690px;" width="15" height="14" viewBox="0 0 15 14"><path d="M0 0.5h4M0 2.5h4M0 4.5h4M0 6.5h4M0 8.5h4M0 10.5h4M0 12.5h4" stroke="#7a7a7a" stroke-width="0.9"/><path d="M4 0v13.5l10-6.75z" fill="#2ea44f"/></svg><svg class="a" style="left:32px;top:715px;" width="11" height="12" viewBox="0 0 11 12"><rect x="0" y="0" width="3.5" height="12" fill="#8a8a8a"/><rect x="6.5" y="0" width="3.5" height="12" fill="#8a8a8a"/></svg><div class="a" style="left:31px;top:741px;width:12px;height:12px;background:#e05a4f;"></div><div class="a" style="left:27px;top:763px;width:22px;height:1px;background:#cfcfcf;"></div><svg class="a" style="left:30px;top:770px;" width="15" height="15" viewBox="0 0 15 15"><circle cx="6.5" cy="4.5" r="4" fill="#e5675c"/><circle cx="5" cy="10" r="4.3" fill="#e05a4f"/><circle cx="12.5" cy="6" r="1.4" fill="#888"/><circle cx="12.5" cy="10" r="1.4" fill="#888"/></svg><svg class="a" style="left:30px;top:795px;" width="14" height="14" viewBox="0 0 14 14"><circle cx="7" cy="7" r="6.3" fill="#e05a4f" stroke="#777" stroke-width="1.3"/><path d="M3 11L11 3" stroke="#fff" stroke-width="1.5"/></svg><div class="a" style="left:27px;top:814px;width:22px;height:1px;background:#cfcfcf;"></div><svg class="a" style="left:30px;top:825px;" width="14" height="15" viewBox="0 0 14 15"><rect x="0.5" y="0.5" width="7" height="5" fill="#fff" stroke="#4a8ac0"/><rect x="9" y="0.5" width="4.5" height="5" fill="#fff" stroke="#7a7a7a"/><rect x="0" y="8" width="14" height="2" fill="#7a7a7a"/><rect x="0" y="12" width="14" height="2" fill="#7a7a7a"/></svg><svg class="a" style="left:30px;top:851px;" width="16" height="15" viewBox="0 0 16 15"><g transform="translate(6.5,6.5)"><circle r="4" fill="#3a8fd0"/><circle r="1.5" fill="#e8e8e8"/><g stroke="#3a8fd0" stroke-width="2"><path d="M0-6v2.5M0 6v-2.5M-6 0h2.5M6 0h-2.5M-4.3-4.3l1.8 1.8M4.3 4.3l-1.8-1.8M-4.3 4.3l1.8-1.8M4.3-4.3l-1.8 1.8"/></g></g><path d="M12 12h4l-2 2z" fill="#444"/></svg><div class="a" style="left:27px;top:875px;width:22px;height:1px;background:#cfcfcf;"></div><svg class="a" style="left:30px;top:883px;" width="14" height="15" viewBox="0 0 14 15"><path d="M8 1l5 5-3 1-3 3-1 3-5-5 3-1 3-3z" fill="#a070c0"/><path d="M4 10l-4 4" stroke="#555" stroke-width="1.4"/></svg><svg class="a" style="left:31px;top:908px;" width="12" height="12" viewBox="0 0 12 12"><path d="M1 1l10 10M11 1L1 11" stroke="#e05a4f" stroke-width="2.4"/></svg><svg class="a" style="left:32px;top:932px;" width="10" height="15" viewBox="0 0 10 15"><text x="5" y="13.5" font-size="17" font-weight="bold" text-anchor="middle" fill="#3a8fd0" font-family="Liberation Sans">?</text></svg><div class="a" style="left:53px;top:684px;width:1779px;height:1px;background:#a5a5a5;"></div><div class="a" style="left:53px;top:685px;width:1779px;height:28px;background:#c7d0e0;"></div><div class="a" style="left:53px;top:713px;width:1779px;height:1px;background:#a5a5a5;"></div><div class="a" style="left:408px;top:685px;width:1px;height:327px;background:#a5a5a5;"></div><div class="a" style="left:1476px;top:685px;width:1px;height:327px;background:#a5a5a5;"></div><svg class="a" style="left:57px;top:690px;" width="15" height="16"><use href="#frm"/></svg><div class="t " style="left:75.9px;top:690.73px;font-size:13.00px;letter-spacing:-0.110px;">Frames</div><svg class="a" style="left:392px;top:694px;" width="11" height="8" viewBox="0 0 11 8"><path d="M0 5h6" stroke="#707070" stroke-width="1.1"/><path d="M5 2.5l3 2.5-3 2.5z" fill="#707070"/><rect x="8" y="0" width="3" height="3" fill="#707070"/></svg><div class="a" style="left:53px;top:714px;width:355px;height:29px;background:#e8e8e8;"></div><div class="a" style="left:54px;top:715px;width:298px;height:27px;border:1px solid #a8a8a8;border-radius:3px;background:#e9e9e9"></div><div class="a" style="left:327px;top:715px;width:25px;height:27px;background:#3c78d6;border-radius:0 3px 3px 0"></div><svg class="a" style="left:335px;top:726px;" width="10" height="6" viewBox="0 0 10 6"><path d="M0 0h10L5 6z" fill="#fff"/></svg><svg class="a" style="left:62px;top:720px;" width="10" height="15" viewBox="0 0 10 15"><rect x="0" y="0" width="10" height="2" fill="#444"/><rect x="0" y="13" width="10" height="2" fill="#444"/><rect x="1" y="2" width="8" height="11" fill="#d89a2a"/><path d="M1 4h8M1 6.5h8M1 9h8M1 11.5h8" stroke="#7a5a10" stroke-width="0.8"/></svg><div class="t " style="left:79.3px;top:718.37px;font-size:15.50px;letter-spacing:-0.081px;">MainThread</div><div class="a" style="left:355px;top:717px;width:1px;height:22px;background:#c8c8c8;"></div><svg class="a" style="left:364px;top:721px;" width="12" height="13" viewBox="0 0 12 13"><path d="M6 0l6 6H8v7H4V6H0z" fill="#8a8a8a"/></svg><svg class="a" style="left:389px;top:721px;" width="12" height="13" viewBox="0 0 12 13"><path d="M6 13L0 7h4V0h4v7h4z" fill="#3a8fd0"/></svg><div class="a" style="left:53px;top:743px;width:341px;height:268px;background:#ffffe4;"></div><div class="a" style="left:53px;top:743px;width:341px;height:22px;background:#3875d7;"></div><div class="a" style="left:53px;top:985px;width:341px;height:22px;background:#fff;"></div><div class="a" style="left:394px;top:743px;width:14px;height:268px;background:#fff;"></div><div class="a" style="left:398px;top:743px;width:10px;height:233px;background:#b5b5b5;"></div><svg class="a" style="left:56px;top:746px;" width="15" height="16"><use href="#frm"/></svg><div class="t " style="left:74.0px;top:745.47px;font-size:15.50px;color:#fff;letter-spacing:-0.427px;">&lt;module&gt;, 0004_auto_20160327_2222.py:8</div><svg class="a" style="left:56px;top:768px;" width="15" height="16"><use href="#frm"/></svg><div class="t " style="left:74.0px;top:767.47px;font-size:15.50px;color:#a9a9a9;letter-spacing:-0.195px;">import_module, __init__.py:37</div><svg class="a" style="left:56px;top:790px;" width="15" height="16"><use href="#frm"/></svg><div class="t " style="left:74.0px;top:789.47px;font-size:15.50px;color:#a9a9a9;letter-spacing:-0.189px;">load_disk, loader.py:105</div><svg class="a" style="left:56px;top:812px;" width="15" height="16"><use href="#frm"/></svg><div class="t " style="left:74.0px;top:811.47px;font-size:15.50px;color:#a9a9a9;letter-spacing:-0.079px;">build_graph, loader.py:170</div><svg class="a" style="left:56px;top:834px;" width="15" height="16"><use href="#frm"/></svg><div class="t " style="left:74.0px;top:833.47px;font-size:15.50px;color:#a9a9a9;letter-spacing:-0.351px;">__init__, loader.py:49</div><svg class="a" style="left:56px;top:856px;" width="15" height="16"><use href="#frm"/></svg><div class="t " style="left:74.0px;top:855.47px;font-size:15.50px;color:#a9a9a9;letter-spacing:-0.212px;">__init__, executor.py:20</div><svg class="a" style="left:56px;top:878px;" width="15" height="16"><use href="#frm"/></svg><div class="t " style="left:74.0px;top:877.47px;font-size:15.50px;color:#a9a9a9;letter-spacing:-0.027px;">handle, migrate.py:89</div><svg class="a" style="left:56px;top:900px;" width="15" height="16"><use href="#frm"/></svg><div class="t " style="left:74.0px;top:899.47px;font-size:15.50px;color:#a9a9a9;letter-spacing:-0.093px;">execute, base.py:399</div><svg class="a" style="left:56px;top:922px;" width="15" height="16"><use href="#frm"/></svg><div class="t " style="left:74.0px;top:921.47px;font-size:15.50px;color:#a9a9a9;letter-spacing:-0.168px;">run_from_argv, base.py:348</div><svg class="a" style="left:56px;top:944px;" width="15" height="16"><use href="#frm"/></svg><div class="t " style="left:74.0px;top:943.47px;font-size:15.50px;color:#a9a9a9;letter-spacing:-0.273px;">execute, __init__.py:345</div><svg class="a" style="left:56px;top:966px;" width="15" height="16"><use href="#frm"/></svg><div class="t " style="left:74.0px;top:965.47px;font-size:15.50px;color:#a9a9a9;letter-spacing:-0.162px;">execute_from_command_line, __init__.py:353</div><svg class="a" style="left:56px;top:988px;" width="15" height="16"><use href="#frm"/></svg><div class="t " style="left:74.0px;top:987.47px;font-size:15.50px;color:#000;letter-spacing:-0.195px;">&lt;module&gt;, manage.py:10</div><svg class="a" style="left:415px;top:691px;" width="13" height="12" viewBox="0 0 13 12"><rect x="0" y="0" width="13" height="3" fill="#c0955a"/><rect x="0" y="4.5" width="13" height="3" fill="#c0955a"/><rect x="0" y="9" width="13" height="3" fill="#c0955a"/></svg><div class="t " style="left:431.8px;top:690.73px;font-size:13.00px;letter-spacing:0.267px;">Variables</div><svg class="a" style="left:1462px;top:694px;" width="11" height="8" viewBox="0 0 11 8"><path d="M0 5h6" stroke="#707070" stroke-width="1.1"/><path d="M5 2.5l3 2.5-3 2.5z" fill="#707070"/><rect x="8" y="0" width="3" height="3" fill="#707070"/></svg><div class="a" style="left:409px;top:714px;width:1067px;height:297px;background:#fff;"></div><svg class="a" style="left:413px;top:721px;" width="8" height="9"><use href="#trr"/></svg><svg class="a" style="left:433px;top:719px;" width="12" height="12" viewBox="0 0 12 12"><rect x="0" y="0" width="12" height="3" fill="#c0955a"/><rect x="0" y="4.5" width="12" height="3" fill="#c0955a"/><rect x="0" y="9" width="12" height="3" fill="#c0955a"/></svg><div class="t " style="left:450.0px;top:716.27px;font-size:15.50px;color:#9b1010;letter-spacing:-0.427px;">__builtins__</div><div class="t " style="left:530.5px;top:716.27px;font-size:15.50px;">=</div><div class="t " style="left:542.5px;top:716.27px;font-size:15.50px;color:#8c8c8c;letter-spacing:0.088px;">{dict}</div><div class="t " style="left:580.2px;top:716.27px;font-size:15.50px;letter-spacing:0.094px;">{&#x27;bytearray&#x27;: &lt;type &#x27;bytearray&#x27;&gt;, &#x27;IndexError&#x27;: &lt;type &#x27;exceptions.IndexError&#x27;&gt;, &#x27;all&#x27;: &lt;built-in function all&gt;, &#x27;help&#x27;: Type help() I</div><svg class="a" style="left:433px;top:741px;" width="12" height="12" viewBox="0 0 12 12"><rect x="0.5" y="0.5" width="11" height="11" fill="#fff" stroke="#6e6e6e"/><path d="M3.5 2.5v3M5.5 2.5h2v3h-2zM3.5 6.5h2v3h-2zM7.5 6.5v3" stroke="#3b6e9a" stroke-width="0.8" fill="none"/></svg><div class="t " style="left:450.0px;top:738.27px;font-size:15.50px;color:#9b1010;letter-spacing:-0.782px;">__doc__</div><div class="t " style="left:505.5px;top:738.27px;font-size:15.50px;">=</div><div class="t " style="left:518.6px;top:738.27px;font-size:15.50px;color:#8c8c8c;letter-spacing:-0.077px;">{NoneType}</div><div class="t " style="left:603.0px;top:738.27px;font-size:15.50px;">None</div><svg class="a" style="left:433px;top:763px;" width="12" height="12" viewBox="0 0 12 12"><rect x="0.5" y="0.5" width="11" height="11" fill="#fff" stroke="#6e6e6e"/><path d="M3.5 2.5v3M5.5 2.5h2v3h-2zM3.5 6.5h2v3h-2zM7.5 6.5v3" stroke="#3b6e9a" stroke-width="0.8" fill="none"/></svg><div class="t " style="left:450.0px;top:760.27px;font-size:15.50px;color:#9b1010;letter-spacing:-0.537px;">__file__</div><div class="t " style="left:502.2px;top:760.27px;font-size:15.50px;">=</div><div class="t " style="left:514.8px;top:760.27px;font-size:15.50px;color:#8c8c8c;letter-spacing:0.006px;">{str}</div><div class="t " style="left:546.5px;top:760.27px;font-size:15.50px;letter-spacing:-0.004px;">&#x27;/app/reddit/users/migrations/0004_auto_20160327_2222.py&#x27;</div><svg class="a" style="left:433px;top:785px;" width="12" height="12" viewBox="0 0 12 12"><rect x="0.5" y="0.5" width="11" height="11" fill="#fff" stroke="#6e6e6e"/><path d="M3.5 2.5v3M5.5 2.5h2v3h-2zM3.5 6.5h2v3h-2zM7.5 6.5v3" stroke="#3b6e9a" stroke-width="0.8" fill="none"/></svg><div class="t " style="left:450.0px;top:782.27px;font-size:15.50px;color:#9b1010;letter-spacing:-0.807px;">__name__</div><div class="t " style="left:519.0px;top:782.27px;font-size:15.50px;">=</div><div class="t " style="left:531.6px;top:782.27px;font-size:15.50px;color:#8c8c8c;letter-spacing:0.026px;">{str}</div><div class="t " style="left:566.0px;top:782.27px;font-size:15.50px;letter-spacing:-0.240px;">&#x27;reddit.users.migrations.0004_auto_20160327_2222&#x27;</div><svg class="a" style="left:433px;top:807px;" width="12" height="12" viewBox="0 0 12 12"><rect x="0.5" y="0.5" width="11" height="11" fill="#fff" stroke="#6e6e6e"/><path d="M3.5 2.5v3M5.5 2.5h2v3h-2zM3.5 6.5h2v3h-2zM7.5 6.5v3" stroke="#3b6e9a" stroke-width="0.8" fill="none"/></svg><div class="t " style="left:450.0px;top:804.27px;font-size:15.50px;color:#9b1010;letter-spacing:-0.553px;">__package__</div><div class="t " style="left:539.1px;top:804.27px;font-size:15.50px;">=</div><div class="t " style="left:551.2px;top:804.27px;font-size:15.50px;color:#8c8c8c;letter-spacing:0.146px;">{str}</div><div class="t " style="left:583.5px;top:804.27px;font-size:15.50px;letter-spacing:0.152px;">&#x27;reddit.users.migrations&#x27;</div><svg class="a" style="left:413px;top:831px;" width="8" height="9"><use href="#trr"/></svg><svg class="a" style="left:433px;top:829px;" width="12" height="12" viewBox="0 0 12 12"><rect x="0" y="0" width="12" height="3" fill="#c0955a"/><rect x="0" y="4.5" width="12" height="3" fill="#c0955a"/><rect x="0" y="9" width="12" height="3" fill="#c0955a"/></svg><div class="t " style="left:450.0px;top:826.27px;font-size:15.50px;color:#9b1010;letter-spacing:0.070px;">migrations</div><div class="t " style="left:524.0px;top:826.27px;font-size:15.50px;">=</div><div class="t " style="left:537.0px;top:826.27px;font-size:15.50px;color:#8c8c8c;letter-spacing:0.189px;">{module}</div><div class="t " style="left:603.0px;top:826.27px;font-size:15.50px;letter-spacing:0.195px;">&lt;module &#x27;django.db.migrations&#x27; from &#x27;/usr/local/lib/python2.7/site-packages/django/db/migrations/__init__.pyc&#x27;&gt;</div><svg class="a" style="left:413px;top:853px;" width="8" height="9"><use href="#trr"/></svg><svg class="a" style="left:433px;top:851px;" width="12" height="12" viewBox="0 0 12 12"><rect x="0" y="0" width="12" height="3" fill="#c0955a"/><rect x="0" y="4.5" width="12" height="3" fill="#c0955a"/><rect x="0" y="9" width="12" height="3" fill="#c0955a"/></svg><div class="t " style="left:450.0px;top:848.27px;font-size:15.50px;color:#9b1010;letter-spacing:0.006px;">models</div><div class="t " style="left:502.2px;top:848.27px;font-size:15.50px;">=</div><div class="t " style="left:514.8px;top:848.27px;font-size:15.50px;color:#8c8c8c;letter-spacing:0.189px;">{module}</div><div class="t " style="left:580.8px;top:848.27px;font-size:15.50px;letter-spacing:0.207px;">&lt;module &#x27;django.db.models&#x27; from &#x27;/usr/local/lib/python2.7/site-packages/django/db/models/__init__.pyc&#x27;&gt;</div><svg class="a" style="left:413px;top:875px;" width="8" height="9"><use href="#trr"/></svg><svg class="a" style="left:433px;top:873px;" width="12" height="12" viewBox="0 0 12 12"><rect x="0" y="0" width="12" height="3" fill="#c0955a"/><rect x="0" y="4.5" width="12" height="3" fill="#c0955a"/><rect x="0" y="9" width="12" height="3" fill="#c0955a"/></svg><div class="t " style="left:450.0px;top:870.27px;font-size:15.50px;color:#9b1010;letter-spacing:0.100px;">unicode_literals</div><div class="t " style="left:561.1px;top:870.27px;font-size:15.50px;">=</div><div class="t " style="left:574.0px;top:870.27px;font-size:15.50px;color:#8c8c8c;letter-spacing:-0.008px;">{instance}</div><div class="t " style="left:645.5px;top:870.27px;font-size:15.50px;letter-spacing:-0.323px;">_Feature: _Feature((2, 6, 0, &#x27;alpha&#x27;, 2), (3, 0, 0, &#x27;alpha&#x27;, 0), 131072)</div><div class="t " style="left:1426.0px;top:716.27px;font-size:15.50px;color:#8c8c8c;letter-spacing:-0.973px;">...</div><div class="t " style="left:1439.0px;top:716.27px;font-size:15.50px;color:#8c8c8c;letter-spacing:-0.149px;">View</div><div class="a" style="left:409px;top:1001px;width:609px;height:10px;background:#b5b5b5;"></div><svg class="a" style="left:1481px;top:691px;" width="15" height="13" viewBox="0 0 15 13"><rect x="0.5" y="0.5" width="14" height="11" fill="#fff" stroke="#7a7a7a"/><rect x="1" y="1" width="13" height="2" fill="#4f9bd0"/><circle cx="4" cy="9" r="2.5" fill="none" stroke="#3a9a3a" stroke-width="1.3"/><circle cx="9" cy="9" r="2.5" fill="none" stroke="#3a9a3a" stroke-width="1.3"/></svg><div class="t " style="left:1499.0px;top:690.73px;font-size:13.00px;letter-spacing:0.490px;">Watches</div><svg class="a" style="left:1818px;top:694px;" width="11" height="8" viewBox="0 0 11 8"><path d="M0 5h6" stroke="#707070" stroke-width="1.1"/><path d="M5 2.5l3 2.5-3 2.5z" fill="#707070"/><rect x="8" y="0" width="3" height="3" fill="#707070"/></svg><div class="a" style="left:1477px;top:714px;width:355px;height:25px;background:#e8e8e8;"></div><div class="a" style="left:1477px;top:739px;width:355px;height:1px;background:#a5a5a5;"></div><div class="a" style="left:1477px;top:740px;width:355px;height:271px;background:#fff;"></div><svg class="a" style="left:1482px;top:720px;" width="13" height="13" viewBox="0 0 13 13"><path d="M6.5 0.5v12M0.5 6.5h12" stroke="#2ea44f" stroke-width="2.2"/></svg><svg class="a" style="left:1507px;top:720px;" width="13" height="13" viewBox="0 0 13 13"><path d="M0.5 6.5h12" stroke="#8a8a8a" stroke-width="2"/></svg><svg class="a" style="left:1533px;top:720px;" width="12" height="13" viewBox="0 0 12 13"><path d="M6 0l6 6H8v7H4V6H0z" fill="#8a8a8a"/></svg><svg class="a" style="left:1558px;top:720px;" width="12" height="13" viewBox="0 0 12 13"><path d="M6 13L0 7h4V0h4v7h4z" fill="#8a8a8a"/></svg><svg class="a" style="left:1582px;top:719px;" width="14" height="15" viewBox="0 0 14 15"><rect x="0.5" y="2.5" width="8" height="11" fill="#fff" stroke="#8a8a8a" stroke-width="1.3"/><rect x="5" y="0.5" width="8" height="11" fill="#fff" stroke="#8a8a8a" stroke-width="1.3"/></svg><div class="t " style="left:1613.0px;top:824.97px;font-size:15.50px;color:#a8a8a8;letter-spacing:0.192px;">No watches</div><div class="a" style="left:0px;top:1011px;width:1855px;height:1px;background:#a5a5a5;"></div><div class="a" style="left:550px;top:1012px;width:92px;height:22px;background:#bdbdbd;"></div><svg class="a" style="left:33px;top:1016px;" width="14" height="14" viewBox="0 0 14 14"><path d="M4.5 0.5h3q2 0 2 2v3.5H4.5q-2 0-2 2V9H1.5q-1.5 0-1.5-2V4.5q0-1.8 1.8-1.8h1V2.5q0-2 1.7-2z" fill="#3e80ba"/><path d="M9 13H6q-2 0-2-2V7.5h5q2 0 2-2V4.5h1q1.5 0 1.5 2v2.5q0 1.8-1.8 1.8h-1v.7" fill="#e5b520"/><path d="M9.5 8.5l3 3-3 3" fill="none" stroke="#444" stroke-width="1.4"/></svg><div class="t " style="left:49.6px;top:1015.98px;font-size:13.50px;letter-spacing:0.099px;">Python Console</div><svg class="a" style="left:172px;top:1017px;" width="12" height="12" viewBox="0 0 12 12"><rect x="0.5" y="0.5" width="11" height="11" fill="#fff" stroke="#777"/><rect x="2" y="2" width="8" height="8" fill="#888"/><path d="M3 4l2 1.5L3 7" stroke="#fff" stroke-width="0.9" fill="none"/></svg><div class="t " style="left:188.0px;top:1015.98px;font-size:13.50px;letter-spacing:-0.064px;">Terminal</div><svg class="a" style="left:264px;top:1016px;" width="14" height="14" viewBox="0 0 14 14"><rect x="0" y="0" width="9" height="9" fill="#4a9ad0"/><circle cx="8.5" cy="8.5" r="5" fill="#e09a3a"/><path d="M3 8l3 3 5-6" fill="#2ea44f"/></svg><div class="t " style="left:280.7px;top:1015.98px;font-size:13.50px;letter-spacing:0.058px;"><u>9</u>: Version Control</div><svg class="a" style="left:413px;top:1016px;" width="14" height="14" viewBox="0 0 14 14"><circle cx="5.5" cy="5.5" r="4.3" fill="#fff" stroke="#6a6a6a" stroke-width="1.6"/><path d="M8.5 8.5l4.5 4.5" stroke="#6a6a6a" stroke-width="2.2"/></svg><div class="t " style="left:431.0px;top:1015.98px;font-size:13.50px;letter-spacing:-0.510px;"><u>3</u>: Find</div><svg class="a" style="left:489px;top:1016px;" width="11" height="14" viewBox="0 0 11 14"><path d="M0 0v14l11-7z" fill="#3ba64b"/></svg><div class="t " style="left:505.0px;top:1015.98px;font-size:13.50px;letter-spacing:-0.862px;"><u>4</u>: Run</div><svg class="a" style="left:560px;top:1016px;" width="16" height="16" viewBox="0 0 16 16"><ellipse cx="6.5" cy="7.5" rx="5" ry="5.8" fill="#3ba64b"/><path d="M9 2.8a4.5 5 0 0 1 0 9.4z" fill="#5a5a5a"/><path d="M1.5 1l2 2M11 1l-2 2M0 7.5h2M11 7.5h2M1.5 14l2-2M11 14l-2-2" stroke="#555" stroke-width="0.9"/><circle cx="13" cy="13" r="2.2" fill="#22cc22"/></svg><div class="t " style="left:578.0px;top:1015.98px;font-size:13.50px;letter-spacing:-0.349px;"><u>5</u>: Debug</div><svg class="a" style="left:653px;top:1016px;" width="13" height="14" viewBox="0 0 13 14"><rect x="0" y="0" width="8" height="6" rx="1" fill="#fff" stroke="#777"/><circle cx="8" cy="7.5" r="3" fill="#e8b070"/><path d="M4 14q0-3 4-3t4 3z" fill="#4a8ac0"/></svg><div class="t " style="left:669.8px;top:1015.98px;font-size:13.50px;letter-spacing:-0.701px;"><u>6</u>: TODO</div><svg class="a" style="left:1743px;top:1019px;" width="13" height="11" viewBox="0 0 13 11"><path d="M0 0h13v8H5l-3 3V8H0z" fill="#9a9a9a"/></svg><div class="t " style="left:1761.8px;top:1015.98px;font-size:13.50px;letter-spacing:-0.022px;">Event Log</div><div class="a" style="left:0px;top:1034px;width:1855px;height:1px;background:#a5a5a5;"></div><div class="a" style="left:9px;top:1039px;width:14px;height:12px;border:1px solid #5a5a5a;background:#bababa"></div><div class="a" style="left:9px;top:1052px;width:14px;height:1px;background:#5a5a5a;"></div><div class="t " style="left:31.0px;top:1037.92px;font-size:15.00px;letter-spacing:-0.112px;">Tests Passed: 0 passed (yesterday 22:21)</div><div class="t " style="left:1598.0px;top:1038.37px;font-size:14.50px;">8:1</div><div class="t " style="left:1632.5px;top:1038.37px;font-size:14.50px;color:#a0a0a0;">LF</div><div class="t " style="left:1666.0px;top:1038.37px;font-size:14.50px;color:#a0a0a0;letter-spacing:-0.096px;">UTF-8</div><div class="t " style="left:1720.0px;top:1037.92px;font-size:15.00px;letter-spacing:0.150px;">Git: master</div><svg class="a" style="left:1796px;top:1042px;" width="5" height="9" viewBox="0 0 5 9"><path d="M0 3.5l2.5-3.5 2.5 3.5zM0 5.5l2.5 3.5 2.5-3.5z" fill="#555"/></svg><svg class="a" style="left:1813px;top:1041px;" width="9" height="11" viewBox="0 0 9 11"><path d="M2 5V3.5a2.5 2.5 0 0 1 5 0V5" fill="none" stroke="#8a8a8a" stroke-width="1.3"/><rect x="0.5" y="5" width="8" height="6" fill="#8a8a8a"/></svg><svg class="a" style="left:1834px;top:1038px;" width="13" height="15" viewBox="0 0 13 15"><circle cx="6.5" cy="7" r="5.5" fill="#fff" stroke="#7a7a7a" stroke-width="1.1"/><path d="M1 4.5h11" stroke="#7a7a7a" stroke-width="1.6"/><circle cx="4.5" cy="7.5" r="1" fill="#555"/><circle cx="8.5" cy="7.5" r="1" fill="#555"/><path d="M4 10.5h5" stroke="#555"/><path d="M2 13h9" stroke="#7a7a7a" stroke-width="1.5"/></svg></body></html>
